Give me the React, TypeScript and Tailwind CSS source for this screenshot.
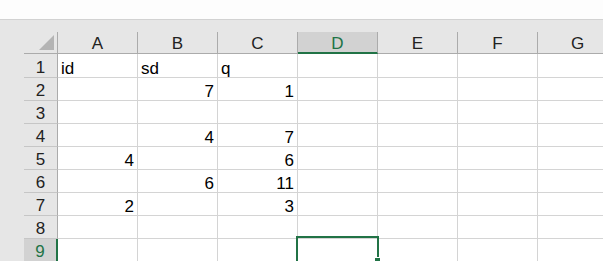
import { FC } from "react";

const COLS = ["A", "B", "C", "D", "E", "F", "G"];

// row number -> values per column (A..C)
const DATA: Record<number, { v: string; left?: boolean }[]> = {
  1: [{ v: "id", left: true }, { v: "sd", left: true }, { v: "q", left: true }],
  2: [{ v: "" }, { v: "7" }, { v: "1" }],
  3: [],
  4: [{ v: "" }, { v: "4" }, { v: "7" }],
  5: [{ v: "4" }, { v: "" }, { v: "6" }],
  6: [{ v: "" }, { v: "6" }, { v: "11" }],
  7: [{ v: "2" }, { v: "" }, { v: "3" }],
  8: [],
  9: [],
};

const font = { fontFamily: '"Liberation Sans", Arial, sans-serif' };

const ColHeader: FC<{ label: string; active?: boolean }> = ({ label, active }) => (
  <div
    className={`flex items-end justify-center h-[22px] border-r border-[#ababab] text-[17px] leading-[17px] ${
      active
        ? "bg-[#d2d2d2] text-[#217346] border-b-2 border-b-[#217346]"
        : "bg-[#e6e6e6] text-[#222] border-b border-b-[#ababab]"
    }`}
  >
    <span className={active ? "" : "pb-[1px]"}>{label}</span>
  </div>
);

const RowHeader: FC<{ n: number; active?: boolean }> = ({ n, active }) => (
  <div
    className={`flex items-end justify-center border-b border-[#c6c6c6] text-[17px] leading-[17px] ${
      active
        ? "bg-[#d2d2d2] text-[#217346] border-r-2 border-r-[#217346]"
        : "bg-[#e6e6e6] text-[#222] border-r border-r-[#ababab]"
    }`}
  >
    <span className="pb-[1px]">{n}</span>
  </div>
);

export default function App() {
  const rows = [1, 2, 3, 4, 5, 6, 7, 8, 9];
  return (
    <div className="w-[603px] h-[261px] overflow-hidden bg-white" style={font}>
      <div className="h-[20px] bg-[#fdfdfd] border-b border-[#d2d2d2]" />
      <div className="flex h-[241px] bg-[#e6e6e6]">
        <div className="w-[24px] shrink-0" />
        <div className="pt-[12px] relative">
          <div className="grid grid-cols-[34px_repeat(7,80px)] grid-rows-[22px_24px_repeat(8,23px)] bg-white">
            {/* corner */}
            <div className="relative bg-[#e6e6e6] border-r border-b border-[#ababab]">
              <svg className="absolute right-[3px] bottom-[3px]" width="15" height="15" viewBox="0 0 15 15">
                <polygon points="15,0 15,15 0,15" fill="#b4b4b4" />
              </svg>
            </div>
            {COLS.map((c) => (
              <ColHeader key={c} label={c} active={c === "D"} />
            ))}
            {rows.map((r) => (
              <div key={r} className="contents">
                <RowHeader n={r} active={r === 9} />
                {COLS.map((c, i) => {
                  const cell = DATA[r]?.[i];
                  return (
                    <div
                      key={c}
                      className={`flex items-end border-r border-b border-[#d4d4d4] px-[3px] text-[17px] leading-[17px] text-black ${
                        cell?.left ? "justify-start" : "justify-end"
                      }`}
                    >
                      {cell?.v}
                    </div>
                  );
                })}
              </div>
            ))}
          </div>
          {/* active cell D9 */}
          <div className="absolute left-[272px] top-[216px] w-[83px] h-[30px] border-2 border-[#217346]">
            <div className="absolute right-[-4px] top-[19px] w-[7px] h-[5px] bg-[#217346] border border-white" />
          </div>
        </div>
      </div>
    </div>
  );
}
